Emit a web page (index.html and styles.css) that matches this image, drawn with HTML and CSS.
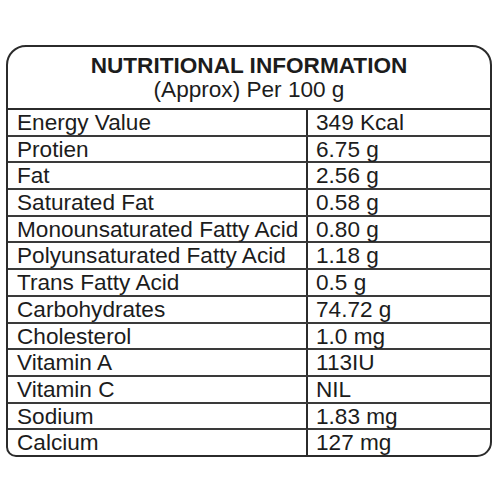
FILE: index.html
```html
<!DOCTYPE html>
<html lang="en">
<head>
    <meta charset="UTF-8">
    <meta name="viewport" content="width=device-width, initial-scale=1.0">
    <title>Nutritional Information</title>
    <link rel="stylesheet" href="styles.css">
</head>
<body>
    <div class="panel">
        <div class="panel-head">
            <h1>NUTRITIONAL INFORMATION</h1>
            <p>(Approx) Per 100 g</p>
        </div>
        <div class="facts">
            <div class="row"><span class="name">Energy Value</span><span class="value">349 Kcal</span></div>
            <div class="row"><span class="name">Protien</span><span class="value">6.75 g</span></div>
            <div class="row"><span class="name">Fat</span><span class="value">2.56 g</span></div>
            <div class="row"><span class="name">Saturated Fat</span><span class="value">0.58 g</span></div>
            <div class="row"><span class="name">Monounsaturated Fatty Acid</span><span class="value">0.80 g</span></div>
            <div class="row"><span class="name">Polyunsaturated Fatty Acid</span><span class="value">1.18 g</span></div>
            <div class="row"><span class="name">Trans Fatty Acid</span><span class="value">0.5 g</span></div>
            <div class="row"><span class="name">Carbohydrates</span><span class="value">74.72 g</span></div>
            <div class="row"><span class="name">Cholesterol</span><span class="value">1.0 mg</span></div>
            <div class="row"><span class="name">Vitamin A</span><span class="value">113IU</span></div>
            <div class="row"><span class="name">Vitamin C</span><span class="value">NIL</span></div>
            <div class="row"><span class="name">Sodium</span><span class="value">1.83 mg</span></div>
            <div class="row"><span class="name">Calcium</span><span class="value">127 mg</span></div>
        </div>
    </div>
</body>
</html>
```

FILE: styles.css
```css
body {
    margin: 0;
    background-color: #ffffff;
    font-family: "Liberation Sans", Arial, sans-serif;
    color: #1c1c1c;
}
.panel {
    margin: 45px 0 0 6px;
    width: 486px;
    box-sizing: border-box;
    border: 2px solid #2b2b2b;
    border-radius: 20px 20px 15px 10px;
    overflow: hidden;
}
.panel-head {
    padding: 7px 0 6px 0;
    border-bottom: 2px solid #2b2b2b;
    text-align: center;
    font-size: 22.6px;
    line-height: 24px;
}
.panel-head h1 {
    margin: 0;
    font-size: 22.6px;
    font-weight: bold;
}
.panel-head p {
    margin: 0;
}
.facts {
    display: flex;
    flex-direction: column;
}
.row {
    display: grid;
    grid-template-columns: 300px 1fr;
    height: 26.7px;
    box-sizing: border-box;
    border-bottom: 2px solid #3a3a3a;
    font-size: 22.6px;
    line-height: 24px;
}
.row:last-child {
    border-bottom: none;
    height: 24.7px;
}
.name {
    padding: 1px 0 0 9px;
    border-right: 2px solid #2b2b2b;
    white-space: nowrap;
}
.value {
    padding: 1px 0 0 8px;
    white-space: nowrap;
}
```
